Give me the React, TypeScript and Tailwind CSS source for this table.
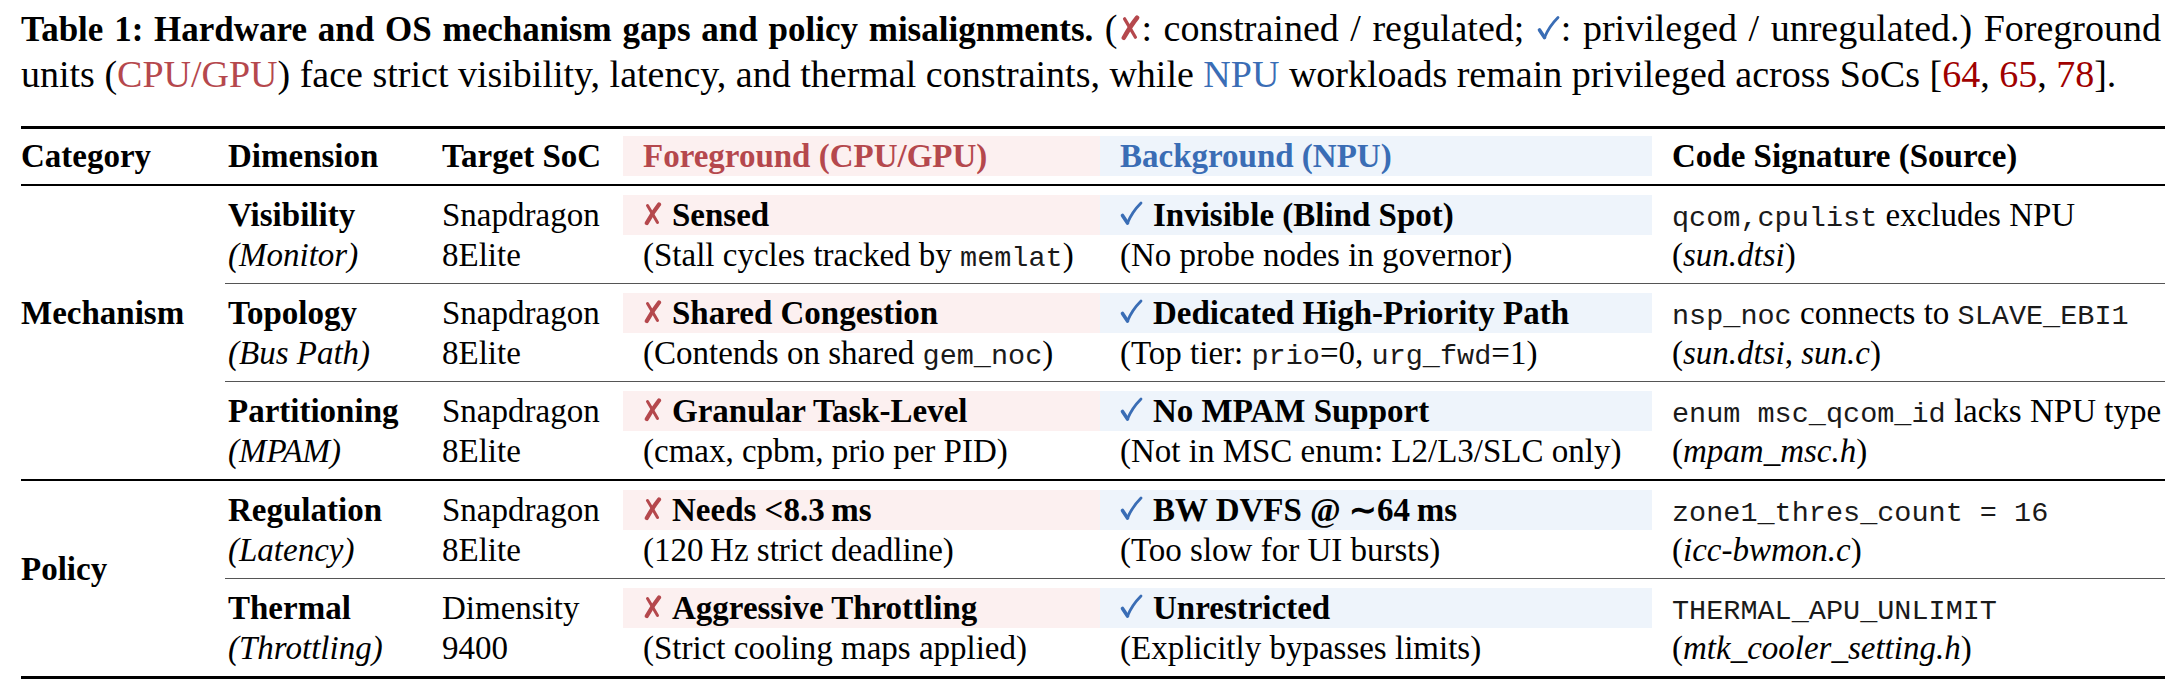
import type { ReactNode } from 'react';

const serif = "font-['Liberation_Serif','Times_New_Roman',serif]";
const mono = "font-['Liberation_Mono','Courier_New',monospace] text-[28.5px] leading-none text-[#1a1a1a]";

const Tt = ({ children }: { children: ReactNode }) => <span className={mono}>{children}</span>;

// pifont-like ballot x / check mark
const Cross = ({ className = '' }: { className?: string }) => (
  <svg viewBox="0 0 19 24" className={`inline-block align-baseline ${className}`} fill="none" stroke="#b5484d" strokeLinecap="round">
    <path d="M16 2.5 Q10 10 3.8 21" strokeWidth="4.2" />
    <path d="M4.5 3.5 Q9 11 14.5 20.5" strokeWidth="3" />
  </svg>
);
const Check = ({ className = '' }: { className?: string }) => (
  <svg viewBox="0 0 23 25" className={`inline-block align-baseline ${className}`} fill="none" stroke="#3a6db5" strokeLinecap="round" strokeLinejoin="round">
    <path d="M2.5 14.5 L7.5 22" strokeWidth="3.6" />
    <path d="M7.5 22 Q12 11 21 2" strokeWidth="2.8" />
  </svg>
);

type Row = {
  dim: string;
  sub: string;
  soc: [string, string];
  fg: ReactNode;
  fgNote: ReactNode;
  bg: ReactNode;
  bgNote: ReactNode;
  code: ReactNode;
  src: ReactNode;
};

const mechanism: Row[] = [
  {
    dim: 'Visibility',
    sub: 'Monitor',
    soc: ['Snapdragon', '8Elite'],
    fg: 'Sensed',
    fgNote: <>(Stall cycles tracked by <Tt>memlat</Tt>)</>,
    bg: 'Invisible (Blind Spot)',
    bgNote: '(No probe nodes in governor)',
    code: <><Tt>qcom,cpulist</Tt> excludes NPU</>,
    src: <>(<i>sun.dtsi</i>)</>,
  },
  {
    dim: 'Topology',
    sub: 'Bus Path',
    soc: ['Snapdragon', '8Elite'],
    fg: 'Shared Congestion',
    fgNote: <>(Contends on shared <Tt>gem_noc</Tt>)</>,
    bg: 'Dedicated High-Priority Path',
    bgNote: <>(Top tier: <Tt>prio</Tt>=0, <Tt>urg_fwd</Tt>=1)</>,
    code: <><Tt>nsp_noc</Tt> connects to <Tt>SLAVE_EBI1</Tt></>,
    src: <>(<i>sun.dtsi</i>, <i>sun.c</i>)</>,
  },
  {
    dim: 'Partitioning',
    sub: 'MPAM',
    soc: ['Snapdragon', '8Elite'],
    fg: 'Granular Task-Level',
    fgNote: '(cmax, cpbm, prio per PID)',
    bg: 'No MPAM Support',
    bgNote: '(Not in MSC enum: L2/L3/SLC only)',
    code: <><Tt>enum msc_qcom_id</Tt> lacks NPU type</>,
    src: <>(<i>mpam_msc.h</i>)</>,
  },
];

const policy: Row[] = [
  {
    dim: 'Regulation',
    sub: 'Latency',
    soc: ['Snapdragon', '8Elite'],
    fg: <>Needs &lt;8.3{'\u2009'}ms</>,
    fgNote: <>(120{'\u2009'}Hz strict deadline)</>,
    bg: <>BW DVFS @ ∼64{'\u2009'}ms</>,
    bgNote: '(Too slow for UI bursts)',
    code: <Tt>zone1_thres_count = 16</Tt>,
    src: <>(<i>icc-bwmon.c</i>)</>,
  },
  {
    dim: 'Thermal',
    sub: 'Throttling',
    soc: ['Dimensity', '9400'],
    fg: 'Aggressive Throttling',
    fgNote: '(Strict cooling maps applied)',
    bg: 'Unrestricted',
    bgNote: '(Explicitly bypasses limits)',
    code: <Tt>THERMAL_APU_UNLIMIT</Tt>,
    src: <>(<i>mtk_cooler_setting.h</i>)</>,
  },
];

const cols = 'grid grid-cols-[214px_201px_477px_552px_513px]';

function DataRow({ row }: { row: Row }) {
  return (
    <div className={`${cols} pt-[9px] pb-[8px] leading-[40px]`}>
      <div className="pl-5">
        <div className="font-bold">{row.dim}</div>
        <div className="italic">({row.sub})</div>
      </div>
      <div className="pl-5">
        <div>{row.soc[0]}</div>
        <div>{row.soc[1]}</div>
      </div>
      <div>
        <div className="pl-5 bg-[#fcf0f0] font-bold h-[40px]">
          <Cross className="w-[19px] h-[24px] mr-[10px]" />
          {row.fg}
        </div>
        <div className="pl-5 h-[40px]">{row.fgNote}</div>
      </div>
      <div>
        <div className="pl-5 bg-[#eef4fb] font-bold h-[40px]">
          <Check className="w-[23px] h-[25px] mr-[10px]" />
          {row.bg}
        </div>
        <div className="pl-5 h-[40px]">{row.bgNote}</div>
      </div>
      <div className="pl-5">
        <div className="h-[40px]">{row.code}</div>
        <div className="h-[40px]">{row.src}</div>
      </div>
    </div>
  );
}

function Group({ label, rows, lift }: { label: string; rows: Row[]; lift: string }) {
  return (
    <div className="flex">
      <div className={`w-[187px] flex items-center font-bold leading-[40px] ${lift}`}>{label}</div>
      <div className="flex flex-col">
        {rows.map((r, i) => (
          <div key={r.dim}>
            {i > 0 && <div className="ml-[17px] border-t border-[#555]" />}
            <DataRow row={r} />
          </div>
        ))}
      </div>
    </div>
  );
}

export default function App() {
  return (
    <div className={`${serif} bg-white text-black text-[33px] w-[2184px] h-[690px] pt-[6px] pl-[21px] whitespace-nowrap`}>
      {/* Caption */}
      <div className="w-[2140px] text-[38px] leading-[44px]">
        <div className="text-justify [text-align-last:justify]">
          <span className="font-bold text-[35px]">Table 1: Hardware and OS mechanism gaps and policy misalignments.</span> (
          <Cross className="w-[22px] h-[26px] mx-[1px]" />: constrained / regulated;{' '}
          <Check className="w-[23px] h-[26px] mx-[1px]" />: privileged / unregulated.) Foreground
        </div>
        <div>
          units (<span className="text-[#b5484d]">CPU/GPU</span>) face strict visibility, latency, and thermal constraints, while{' '}
          <span className="text-[#3a6db5]">NPU</span> workloads remain privileged across SoCs [
          <span className="text-[#a00000]">64</span>, <span className="text-[#a00000]">65</span>,{' '}
          <span className="text-[#a00000]">78</span>].
        </div>
      </div>

      {/* Table */}
      <div className="w-[2144px] mt-[30px] border-t-[3px] border-black">
        <div className="flex pt-[7px] pb-[8px] leading-[40px] font-bold border-b-2 border-black">
          <div className="w-[187px]">Category</div>
          <div className={cols}>
            <div className="pl-5">Dimension</div>
            <div className="pl-5">Target SoC</div>
            <div className="pl-5 bg-[#fcf0f0] text-[#b5484d]">Foreground (CPU/GPU)</div>
            <div className="pl-5 bg-[#eef4fb] text-[#3a6db5]">Background (NPU)</div>
            <div className="pl-5">Code Signature (Source)</div>
          </div>
        </div>
        <Group label="Mechanism" rows={mechanism} lift="pb-[40px]" />
        <div className="border-t-2 border-black" />
        <Group label="Policy" rows={policy} lift="pb-[20px]" />
        <div className="border-t-[3px] border-black" />
      </div>
    </div>
  );
}
